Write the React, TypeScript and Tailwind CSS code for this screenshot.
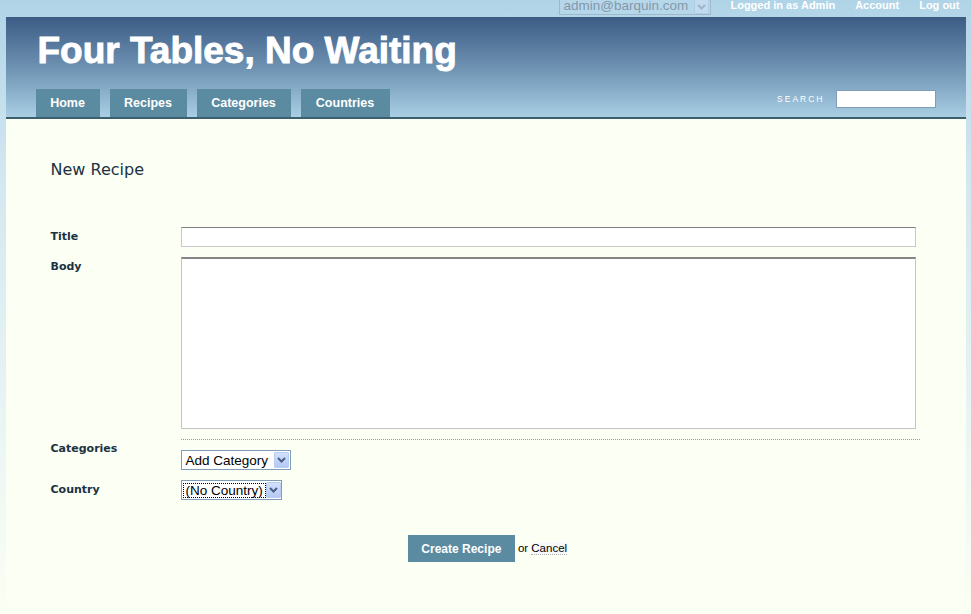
const sans = "font-['Liberation_Sans',Arial,sans-serif]";
const human = "font-['DejaVu_Sans',Verdana,sans-serif]";

function Chevron() {
  return (
    <svg width="9" height="6" viewBox="0 0 9 6">
      <path d="M1 1 L4.5 4.5 L8 1" stroke="#4a5f86" strokeWidth="2" fill="none" />
    </svg>
  );
}

function FakeSelect({ label, width, focused }: { label: string; width: string; focused?: boolean }) {
  return (
    <div className={`${width} h-5 flex items-center justify-between bg-white border border-[#7f9db9] pl-[1px] pr-[1px]`}>
      <span
        className={`${sans} text-[13.5px] leading-[15px] font-normal whitespace-nowrap text-black px-[3px] ${
          focused ? "outline outline-1 outline-dotted outline-black -outline-offset-1" : ""
        }`}
      >
        {label}
      </span>
      <span className="w-[15px] h-4 shrink-0 flex items-center justify-center rounded-[1px] border border-[#b9cdf3] bg-linear-to-b from-[#d3e0fb] to-[#b4c9f4]">
        <Chevron />
      </span>
    </div>
  );
}

export default function App() {
  const tabs = [
    { name: "Home", w: "w-[64px]" },
    { name: "Recipes", w: "w-[77px]" },
    { name: "Categories", w: "w-[94px]" },
    { name: "Countries", w: "w-[89px]" },
  ];

  return (
    <div className="min-h-screen bg-linear-to-b from-[#b0d4e7] via-[#d4e8f1] via-30% to-[#fbfff4]">
      <div className="w-[960px] mx-auto">
        {/* top bar */}
        <div className="h-[17px] flex justify-end items-start overflow-hidden pr-[6px]">
          <div className="mt-[-5px] mr-[19px] w-[152px] h-5 flex items-center justify-between border border-[#9fb8c9] bg-[#b6d7e9] pl-[3px] pr-[1px]">
            <span className={`${sans} text-[13.5px] leading-none text-[#8598aa] pt-[2px]`}>admin@barquin.com</span>
            <span className="w-[15px] h-[15px] mt-[3px] flex items-center justify-center bg-[#c2dcef] border border-[#b0cde3]">
              <svg width="9" height="6" viewBox="0 0 9 6">
                <path d="M1 1 L4.5 4.5 L8 1" stroke="#9fb3c6" strokeWidth="2" fill="none" />
              </svg>
            </span>
          </div>
          <div className={`${sans} flex gap-[20px] text-[11px] leading-none font-bold text-white`}>
            <span>Logged in as Admin</span>
            <span>Account</span>
            <span>Log out</span>
          </div>
        </div>

        {/* header */}
        <div className="h-[102px] flex flex-col bg-linear-to-b from-[#3c5c85] via-[#7397b6] via-55% to-[#a9cfe4] border-b-2 border-[#3b5f6c]">
          <h1
            className={`${sans} ml-[32px] mt-[15px] text-[37px] leading-none font-bold text-white [-webkit-text-stroke:0.9px_white]`}
          >
            Four Tables, No Waiting
          </h1>
          <div className="mt-auto flex justify-between items-start pl-[30px] pr-[30px]">
            <div className="flex gap-[10px]">
              {tabs.map((t) => (
                <div
                  key={t.name}
                  className={`${t.w} h-[28px] pt-[1px] flex items-center justify-center bg-[#5b8ba1] text-white font-bold text-[12.5px] ${sans}`}
                >
                  {t.name}
                </div>
              ))}
            </div>
            <div className="flex items-center gap-[11px] pt-[1px]">
              <span className={`${sans} text-[8.5px] tracking-[2px] text-white`}>SEARCH</span>
              <div className="w-[100px] h-[18px] bg-white border border-[#7f9db9]" />
            </div>
          </div>
        </div>

        {/* content */}
        <div className="bg-[#fbfff4] pt-[43px] pb-[44px] pl-[45px] pr-[46px] text-[#1c3242]">
          <h2 className={`${human} text-[16px] leading-none`}>New Recipe</h2>

          <div className={`${human} mt-[49px] -ml-[1px] text-[11px] font-bold`}>
            <div className="flex">
              <label className="w-[131px] pl-[1px] mt-[4px] leading-none">Title</label>
              <div className="w-[735px] h-5 bg-white border border-[#c8c8c8] border-t-[#7f7f7f]" />
            </div>
            <div className="flex mt-[10px]">
              <label className="w-[131px] pl-[1px] mt-[4px] leading-none">Body</label>
              <div className="w-[735px] h-[172px] bg-white border border-[#c4c4c4] border-t-2 border-t-[#858585]" />
            </div>
            <div className="ml-[131px] mt-[10px] w-[739px] border-t border-dotted border-[#9a9a9a]" />
            <div className="flex">
              <label className="w-[131px] pl-[1px] mt-[3px] leading-none">Categories</label>
              <div className="mt-[10px]">
                <FakeSelect label="Add Category" width="w-[110px]" />
              </div>
            </div>
            <div className="flex mt-[10px]">
              <label className="w-[131px] pl-[1px] mt-[4px] leading-none">Country</label>
              <FakeSelect label="(No Country)" width="w-[101px]" focused />
            </div>
          </div>

          <div className={`${sans} mt-[35px] pl-[5px] flex justify-center items-center`}>
            <button className="w-[107px] h-[27px] bg-[#5b8ba1] text-white text-[12px] font-bold">Create Recipe</button>
            <span className="ml-[3px] text-[11.5px] text-black">
              or <span className="bg-[#f6f8fa] border-b border-dotted border-[#b0b0b0]">Cancel</span>
            </span>
          </div>
        </div>
      </div>
    </div>
  );
}
